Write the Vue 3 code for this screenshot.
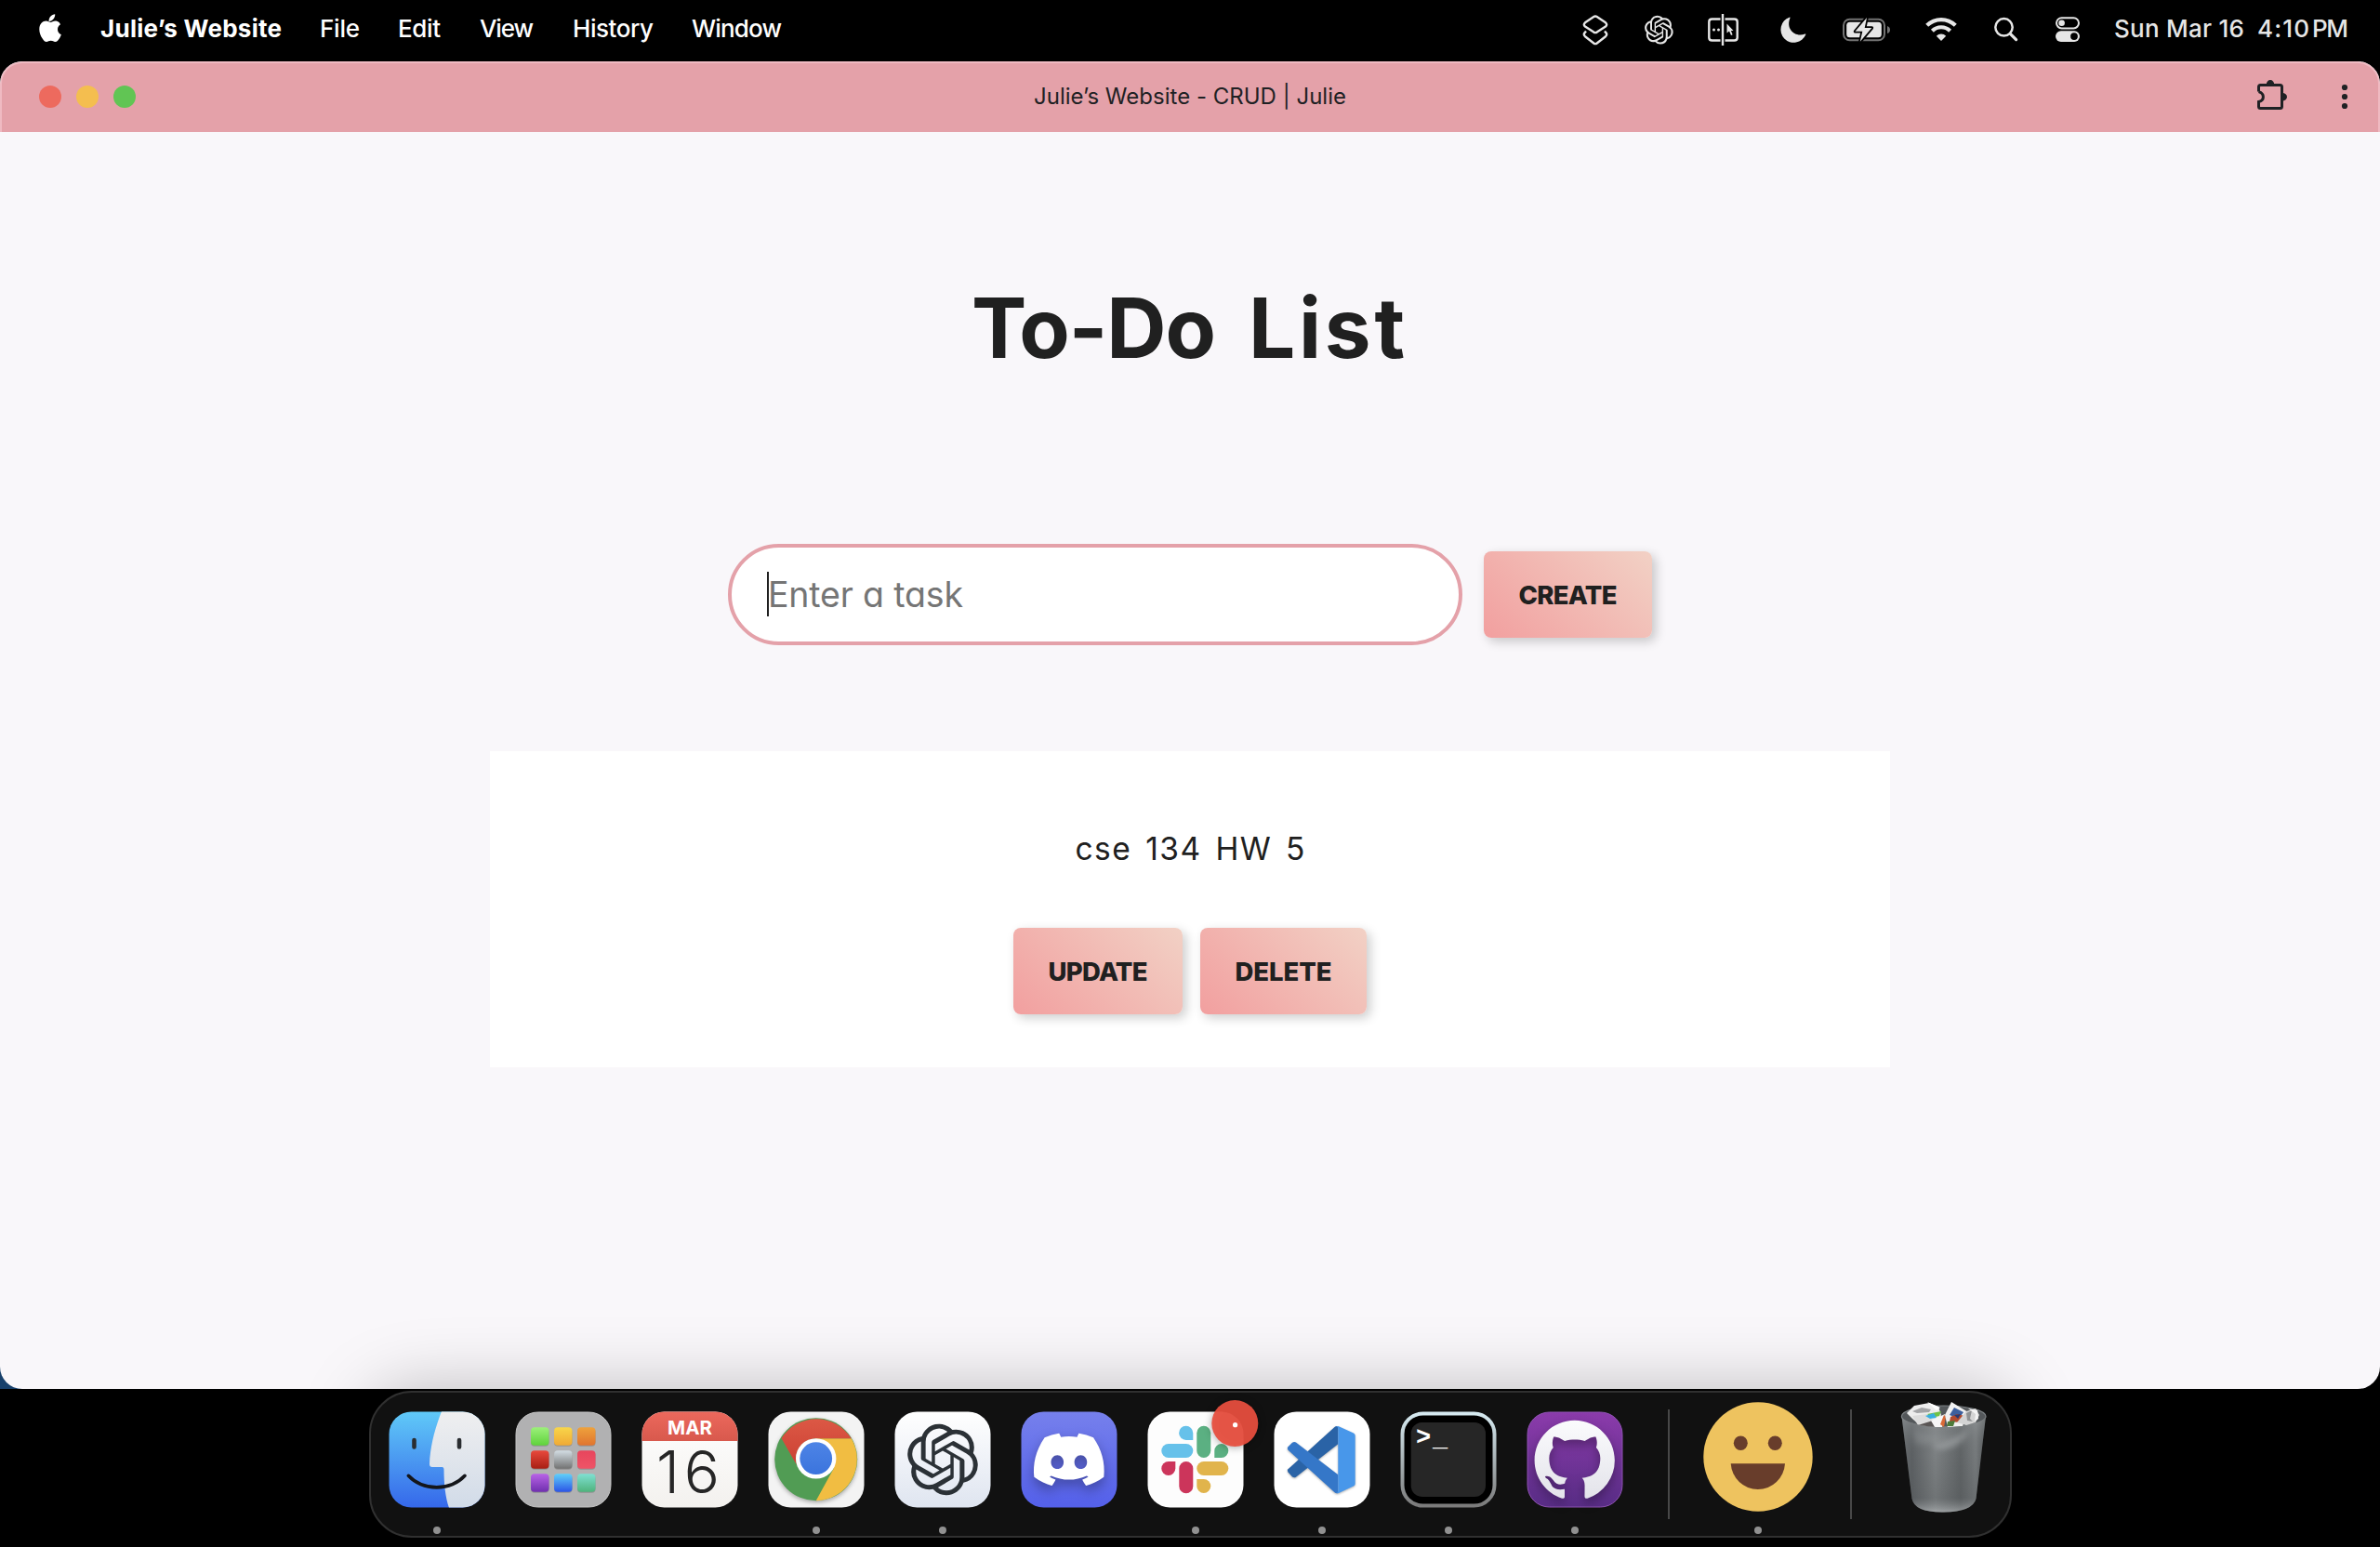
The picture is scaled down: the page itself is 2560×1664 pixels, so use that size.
<script setup>
const menus = [
  { label: 'File', width: 43, left: 344 },
  { label: 'Edit', width: 46, left: 428 },
  { label: 'View', width: 58, left: 516 },
  { label: 'History', width: 87, left: 616 },
  { label: 'Window', width: 97, left: 744 },
]
const menuGaps = menus.map((m, i) =>
  i === 0 ? 39 : m.left - menus[i - 1].left - menus[i - 1].width
)

const tileColors = [
  ['#9cf07a', '#5fd23c'], ['#f8d64a', '#f0a935'], ['#eea23c', '#e0742f'],
  ['#e8493c', '#a81f14'], ['#d3dde3', '#727272'], ['#e8455c', '#ee5467'],
  ['#b863e6', '#6f2fae'], ['#5fd0fa', '#2b54e6'], ['#7fe0d2', '#4fb37c'],
]
const tiles = tileColors.map((c, i) => ({
  id: 'tile' + i,
  from: c[0],
  to: c[1],
  x: 17 + (i % 3) * 25,
  y: 17.3 + Math.floor(i / 3) * 25,
}))

const knot =
  'M22.2819 9.8211a5.9847 5.9847 0 0 0-.5157-4.9108 6.0462 6.0462 0 0 0-6.5098-2.9A6.0651 6.0651 0 0 0 4.9807 4.1818a5.9847 5.9847 0 0 0-3.9977 2.9 6.0462 6.0462 0 0 0 .7427 7.0966 5.98 5.98 0 0 0 .511 4.9107 6.051 6.051 0 0 0 6.5146 2.9001A5.9847 5.9847 0 0 0 13.2599 24a6.0557 6.0557 0 0 0 5.7718-4.2058 5.9894 5.9894 0 0 0 3.9977-2.9001 6.0557 6.0557 0 0 0-.7475-7.0729zm-9.022 12.6081a4.4755 4.4755 0 0 1-2.8764-1.0408l.1419-.0804 4.7783-2.7582a.7948.7948 0 0 0 .3927-.6813v-6.7369l2.02 1.1686a.071.071 0 0 1 .038.052v5.5826a4.504 4.504 0 0 1-4.4945 4.4944zm-9.6607-4.1254a4.4708 4.4708 0 0 1-.5346-3.0137l.142.0852 4.783 2.7582a.7712.7712 0 0 0 .7806 0l5.8428-3.3685v2.3324a.0804.0804 0 0 1-.0332.0615L9.74 19.9502a4.4992 4.4992 0 0 1-6.1408-1.6464zM2.3408 7.8956a4.485 4.485 0 0 1 2.3655-1.9728V11.6a.7664.7664 0 0 0 .3879.6765l5.8144 3.3543-2.0201 1.1685a.0757.0757 0 0 1-.071 0l-4.8303-2.7865A4.504 4.504 0 0 1 2.3408 7.872zm16.5963 3.8558L13.1038 8.364 15.1192 7.2a.0757.0757 0 0 1 .071 0l4.8303 2.7913a4.4944 4.4944 0 0 1-.6765 8.1042v-5.6772a.79.79 0 0 0-.407-.667zm2.0107-3.0231l-.142-.0852-4.7735-2.7818a.7759.7759 0 0 0-.7854 0L9.409 9.2297V6.8974a.0662.0662 0 0 1 .0284-.0615l4.8303-2.7866a4.4992 4.4992 0 0 1 6.6802 4.66zM8.3065 12.863l-2.02-1.1638a.0804.0804 0 0 1-.038-.0567V6.0742a4.4992 4.4992 0 0 1 7.3757-3.4537l-.142.0805L8.704 5.459a.7948.7948 0 0 0-.3927.6813zm1.0976-2.3654l2.602-1.4998 2.6069 1.4998v2.9994l-2.5974 1.4997-2.6067-1.4997Z'

// Tracks a label out (or in) so that it fills the given width exactly.
const vTrack = {
  mounted(el, { value }) {
    const natural = el.getBoundingClientRect().width
    const spacing = (value - natural) / (el.textContent.length - 1)
    el.style.letterSpacing = spacing + 'px'
    el.style.marginRight = -spacing + 'px'
  },
}
</script>

<template>
  <div class="desktop">
    <header class="menubar">
      <svg class="apple" width="28" height="32" viewBox="0 0 28 32" fill="#fff">
        <path d="M19.2 0.2c.2 2-.6 3.900-1.800 5.300-1.200 1.500-3.100 2.500-4.800 2.400-.3-1.900.6-3.900 1.700-5.200C15.500 1.300 17.600.3 19.200.2z" />
        <path d="M25 11.200c-.2.200-3 1.800-3 5.400 0 4.200 3.600 5.600 3.800 5.700 0 .1-.6 2.100-2 4.100-1.200 1.800-2.500 3.600-4.400 3.600s-2.500-1.200-4.700-1.200c-2.200 0-3 1.200-4.700 1.200-1.800 0-3.100-1.700-4.500-3.800C3.700 23.700 2.300 19.900 2.300 16.400c0-5.800 3.700-8.800 7.300-8.800 1.900 0 3.500 1.300 4.700 1.300 1.200 0 3-1.400 5.200-1.400.8 0 3.800.1 5.500 3.700z" />
      </svg>
      <b class="appname"><span v-track="195">Julie’s Website</span></b>
      <nav class="menus">
        <div v-for="(m, i) in menus" :key="m.label" :style="{ width: m.width + 'px', marginLeft: menuGaps[i] + 'px' }">
          <span v-track="m.width">{{ m.label }}</span>
        </div>
      </nav>
      <div class="status">
        <svg width="28" height="34" viewBox="0 0 28 34" fill="none" stroke="#e6e6e6" stroke-width="2.400" stroke-linejoin="round">
          <path d="M12.300 3 3 9.300Q.6 11.400 3 13.500L12.300 19.600Q14 20.600 15.700 19.600L25 13.500Q27.400 11.400 25 9.300L15.700 3Q14 1.900 12.300 3Z" />
          <path d="M4 18.500 2.800 20Q.6 22 3 24.200L12.300 31.500Q14 32.700 15.700 31.500L25 24.200Q27.400 22 25.200 20L24 18.500" />
        </svg>
        <svg class="g39" width="31" height="34" viewBox="0 0 31 34" fill="#e6e6e6">
          <path :d="knot" transform="translate(0 1.800) scale(1.280)" />
        </svg>
        <svg class="g37" width="33" height="34" viewBox="0 0 33 34" fill="none" stroke="#e6e6e6" stroke-width="2.400">
          <path d="M13.500 5.500H4.500Q1.300 5.500 1.300 8.500V25.500Q1.300 28.500 4.500 28.500H13.500M18.500 5.500H28.500Q31.700 5.500 31.700 8.500V25.500Q31.700 28.500 28.500 28.500H18.500M16 0V34" />
          <path d="M20.500 10.500V20.500L23 18.500 25 23 26.600 22.300 24.900 18H27.500Z" fill="#e6e6e6" stroke="none" />
          <circle cx="6.500" cy="17" r="1.500" fill="#e6e6e6" stroke="none" />
          <circle cx="11.500" cy="17" r="1.500" fill="#e6e6e6" stroke="none" />
        </svg>
        <svg class="g45" width="28" height="34" viewBox="0 0 28 34" fill="#e6e6e6">
          <path d="M10.500 4.200C10.800 3.700 10.200 3.400 9.600 3.700A14 14 0 1 0 27.300 22.300C27.600 21.700 27.200 21.300 26.600 21.500C15.500 25.500 5.500 16 10.500 4.200Z" />
        </svg>
        <svg class="g39" width="52" height="34" viewBox="0 0 52 34">
          <rect x="1" y="5.700" width="44" height="22.600" rx="6.500" fill="none" stroke="#737373" stroke-width="2" />
          <path d="M48 13V21Q51 20 51 17T48 13Z" fill="#737373" />
          <rect x="4.200" y="8.800" width="37.600" height="16.400" rx="3.500" fill="#e6e6e6" />
          <path d="M26 4 13.500 18.800H21.300L18.800 29.800 31.300 15H23.700Z" fill="#e6e6e6" stroke="#000" stroke-width="3.600" stroke-linejoin="round" paint-order="stroke" />
        </svg>
        <svg class="g37" width="34" height="34" viewBox="0 0 34 34" fill="none" stroke="#e6e6e6" stroke-width="4.200">
          <path d="M1.700 12.300A21.800 21.800 0 0 1 32.300 12.300" />
          <path d="M7.400 18.200A13.600 13.600 0 0 1 26.600 18.200" />
          <path d="M17 29 11.800 23.700A7.400 7.400 0 0 1 22.200 23.700Z" fill="#e6e6e6" stroke="none" />
        </svg>
        <svg class="g40" width="26" height="34" viewBox="0 0 26 34" fill="none" stroke="#e6e6e6" stroke-width="2.500" stroke-linecap="round">
          <circle cx="10.500" cy="14.300" r="9.200" />
          <path d="M17.300 21.300 23.600 27.600" stroke-width="3.200" />
        </svg>
        <svg class="g40" width="26" height="34" viewBox="0 0 26 34">
          <rect x="1" y="4.200" width="24" height="11.200" rx="5.600" fill="none" stroke="#e6e6e6" stroke-width="2" />
          <circle cx="6.600" cy="9.800" r="3.300" fill="#e6e6e6" />
          <rect y="18.200" width="26" height="11.800" rx="5.900" fill="#e6e6e6" />
          <circle cx="20" cy="24.100" r="3.900" fill="#000" />
        </svg>
        <time class="clock">
          <span class="c1"><span v-track="140">Sun Mar 16</span></span>
          <span class="c2"><span v-track="56">4:10</span></span>
          <span class="c3"><span v-track="39">PM</span></span>
        </time>
      </div>
    </header>

    <section class="window">
      <div class="titlebar">
        <div class="lights"><i class="close"></i><i class="mini"></i><i class="zoom"></i></div>
        <div class="title"><span v-track="336">Julie’s Website - CRUD | Julie</span></div>
        <div class="tools">
          <svg width="33" height="33" viewBox="0 0 33 33" fill="none" stroke="#1f2124" stroke-width="3">
            <path d="M1.500 12.600V7.500Q1.500 5.500 3.500 5.500H24.500Q26.500 5.500 26.500 7.500V28.500Q26.500 30.500 24.500 30.500H3.500Q1.500 30.500 1.500 28.500V23.500C8 22 8 14.500 1.500 12.600" />
            <path d="M9.800 5A4.200 5 0 0 1 18.200 5ZM27 14.100A5 4.200 0 0 1 27 22.500Z" fill="#1f2124" stroke="none" />
          </svg>
          <svg class="more" width="8" height="28" viewBox="0 0 8 28" fill="#1f2124">
            <circle cx="4" cy="4" r="3.100" /><circle cx="4" cy="14" r="3.100" /><circle cx="4" cy="24" r="3.100" />
          </svg>
        </div>
      </div>

      <main class="page">
        <h1><span v-track="263">To-Do</span> <span v-track="168">List</span></h1>
        <form class="entry" @submit.prevent>
          <div class="field">
            <i class="caret"></i>
            <span v-track="210" class="placeholder">Enter a task</span>
          </div>
          <button class="btn create"><span v-track="106">CREATE</span></button>
        </form>
        <article class="task">
          <p><span v-track="247">cse 134 HW 5</span></p>
          <div class="actions">
            <button class="btn update"><span v-track="107">UPDATE</span></button>
            <button class="btn delete"><span v-track="104">DELETE</span></button>
          </div>
        </article>
      </main>
    </section>

    <footer class="dock">
      <div class="slot">
        <svg width="104" height="104" viewBox="0 0 104 104">
          <defs>
            <linearGradient id="fb" x2="0" y2="1"><stop stop-color="#60caf8" /><stop offset="1" stop-color="#3567ea" /></linearGradient>
            <linearGradient id="fw" x2="0" y2="1"><stop stop-color="#efeff0" /><stop offset="1" stop-color="#d1dbe8" /></linearGradient>
            <clipPath id="tile-shape"><rect x=".5" y=".5" width="103" height="103" rx="24" /></clipPath>
          </defs>
          <g clip-path="url(#tile-shape)">
            <rect width="104" height="104" fill="url(#fb)" />
            <path d="M57 0C50 18 44.500 38 44 57Q44 60 47 60H57.500Q59.500 60 59.500 63C59.500 78 61 92 65 104H104V0Z" fill="url(#fw)" />
            <path d="M27.500 31V38.500M76 31V38.500" stroke="#2a2d31" stroke-width="4.600" stroke-linecap="round" />
            <path d="M21.300 69.300C37 86 66.500 86 82 69.300" fill="none" stroke="#14161a" stroke-width="3.600" stroke-linecap="round" />
          </g>
        </svg>
        <i class="dot"></i>
      </div>
      <div class="slot">
        <svg width="104" height="104" viewBox="0 0 104 104">
          <defs>
            <linearGradient v-for="t in tiles" :id="t.id" :key="t.id" x2="0" y2="1"><stop :stop-color="t.from" /><stop offset="1" :stop-color="t.to" /></linearGradient>
          </defs>
          <rect x="1" y="1" width="102" height="102" rx="23.500" fill="#b1b1b2" stroke="#c6c6c6" />
          <rect v-for="t in tiles" :key="t.id" :x="t.x" :y="t.y + 1" width="19.500" height="19.500" rx="4" fill="#7d7d7d" opacity=".6" />
          <rect v-for="t in tiles" :key="t.id" :x="t.x" :y="t.y" width="19.500" height="19.500" rx="4" :fill="`url(#${t.id})`" />
        </svg>
      </div>
      <div class="slot">
        <svg width="104" height="104" viewBox="0 0 104 104">
          <defs>
            <linearGradient id="cr" x2="0" y2="1"><stop stop-color="#ec695d" /><stop offset="1" stop-color="#d8594d" /></linearGradient>
            <linearGradient id="cw" x2="0" y2="1"><stop stop-color="#fff" /><stop offset="1" stop-color="#f3f1ee" /></linearGradient>
            <clipPath id="page-shape"><rect x=".5" y=".5" width="103" height="103" rx="24" /></clipPath>
          </defs>
          <g clip-path="url(#page-shape)">
            <rect width="104" height="104" fill="url(#cw)" />
            <rect width="104" height="32" fill="url(#cr)" />
          </g>
          <text x="52" y="25" text-anchor="middle" font-size="20.500" font-weight="700" fill="#fff" textLength="48">MAR</text>
          <text x="50" y="87.700" text-anchor="middle" font-size="63.500" font-weight="300" fill="#262626" textLength="68">16</text>
        </svg>
      </div>
      <div class="slot">
        <svg width="104" height="104" viewBox="0 0 104 104">
          <defs>
            <linearGradient id="gr" x2="0" y2="1"><stop stop-color="#dc5845" /><stop offset="1" stop-color="#cb4133" /></linearGradient>
            <linearGradient id="gb" x2="0" y2="1"><stop stop-color="#4d84e6" /><stop offset="1" stop-color="#3b74dd" /></linearGradient>
          </defs>
          <rect x=".5" y=".5" width="103" height="103" rx="24" fill="#f3f3f3" />
          <g class="lift">
            <circle cx="51.700" cy="51.700" r="44.500" fill="#519c54" />
            <path d="M51.700 29.300H89.800A44.500 44.500 0 0 1 51.700 96.200L70.800 61.500Z" fill="#f1bd42" />
            <path d="M14.500 29A44.500 44.500 0 0 1 89.800 29.300H51.700A22 22 0 0 0 31 58Z" fill="url(#gr)" />
          </g>
          <circle cx="51.700" cy="50.900" r="21.700" fill="#fff" />
          <circle cx="51.700" cy="50.700" r="17.400" fill="url(#gb)" />
        </svg>
        <i class="dot"></i>
      </div>
      <div class="slot">
        <svg width="104" height="104" viewBox="0 0 104 104">
          <defs><linearGradient id="kw" x2="0" y2="1"><stop stop-color="#fff" /><stop offset="1" stop-color="#dfe5f0" /></linearGradient></defs>
          <rect x=".5" y=".5" width="103" height="103" rx="24" fill="url(#kw)" />
          <path :d="knot" fill="#2b3136" transform="translate(13.700 13.700) scale(3.190)" />
        </svg>
        <i class="dot"></i>
      </div>
      <div class="slot">
        <svg width="104" height="104" viewBox="0 0 104 104">
          <defs><linearGradient id="db" x2="0" y2="1"><stop stop-color="#7680ec" /><stop offset="1" stop-color="#5460ea" /></linearGradient></defs>
          <rect x=".5" y=".5" width="103" height="103" rx="24" fill="url(#db)" />
          <path class="lift" fill="#fff" transform="translate(14 14.900) scale(3.154 3.080)" d="M20.317 4.3698a19.7913 19.7913 0 00-4.8851-1.5152.0741.0741 0 00-.0785.0371c-.211.3753-.4447.8648-.6083 1.2495-1.8447-.2762-3.68-.2762-5.4868 0-.1636-.3933-.4058-.8742-.6177-1.2495a.077.077 0 00-.0785-.037 19.7363 19.7363 0 00-4.8852 1.515.0699.0699 0 00-.0321.0277C.5334 9.0458-.319 13.5799.0992 18.0578a.0824.0824 0 00.0312.0561c2.0528 1.5076 4.0413 2.4228 5.9929 3.0294a.0777.0777 0 00.0842-.0276c.4616-.6304.8731-1.2952 1.226-1.9942a.076.076 0 00-.0416-.1057c-.6528-.2476-1.2743-.5495-1.8722-.8923a.077.077 0 01-.0076-.1277c.1258-.0943.2517-.1923.3718-.2914a.0743.0743 0 01.0776-.0105c3.9278 1.7933 8.18 1.7933 12.0614 0a.0739.0739 0 01.0785.0095c.1202.099.246.1981.3728.2924a.077.077 0 01-.0066.1276 12.2986 12.2986 0 01-1.873.8914.0766.0766 0 00-.0407.1067c.3604.698.7719 1.3628 1.225 1.9932a.076.076 0 00.0842.0286c1.961-.6067 3.9495-1.5219 6.0023-3.0294a.077.077 0 00.0313-.0552c.5004-5.177-.8382-9.6739-3.5485-13.6604a.061.061 0 00-.0312-.0286zM8.02 15.3312c-1.1825 0-2.1569-1.0857-2.1569-2.419 0-1.3332.9555-2.4189 2.157-2.4189 1.2108 0 2.1757 1.0952 2.1568 2.419 0 1.3332-.9555 2.4189-2.1569 2.4189zm7.9748 0c-1.1825 0-2.1569-1.0857-2.1569-2.419 0-1.3332.9554-2.4189 2.1569-2.4189 1.2108 0 2.1757 1.0952 2.1568 2.419 0 1.3332-.946 2.4189-2.1568 2.4189Z" />
        </svg>
      </div>
      <div class="slot">
        <svg width="104" height="104" viewBox="0 0 104 104">
          <rect x=".5" y=".5" width="103" height="103" rx="24" fill="#fdfdfd" />
          <g fill="#66c1ea"><path d="M49.300 31H41.800A7.600 7.600 0 1 1 49.300 23.300Z" /><rect x="15.300" y="35" width="34" height="15" rx="7.500" /></g>
          <g fill="#5bb082"><rect x="53.300" y="15.700" width="15" height="34.300" rx="7.500" /><path d="M72.300 50V42.500A7.500 7.500 0 1 1 79.800 50Z" /></g>
          <g fill="#cc355b"><path d="M30.300 54V61.500A7.500 7.500 0 1 1 22.800 54Z" /><rect x="34.300" y="54" width="15" height="34.300" rx="7.500" /></g>
          <g fill="#e1b44c"><rect x="53.300" y="54" width="34" height="15" rx="7.500" /><path d="M53.300 73H60.800A7.500 7.500 0 1 1 53.300 80.500Z" /></g>
          <circle class="badge" cx="94.300" cy="13" r="25" fill="#e84f3f" fill-opacity=".94" />
          <circle cx="94.600" cy="14.700" r="2.600" fill="#fff" />
        </svg>
        <i class="dot"></i>
      </div>
      <div class="slot">
        <svg width="104" height="104" viewBox="0 0 104 104">
          <rect x=".5" y=".5" width="103" height="103" rx="24" fill="#fff" />
          <g class="soft">
            <path d="M69.300 16.500Q67.500 15.300 65.500 17L15.500 62.300Q14 63.800 15.500 65.500L20 70.500Q22 72 24 70.700L69.300 35.300Z" fill="#2a63a6" />
            <path d="M69.300 87.700Q67.500 89 65.500 87.200L15.500 41.800Q14 40 15.500 38.300L20 33.800Q22 32.200 24 33.500L69.300 68.300Z" fill="#3577c8" />
            <path d="M67 16.300Q68 15.600 70 16.300L86 23.500Q87.700 24.500 87.700 26V78Q87.700 79.500 86 80.500L70 88Q68 88.500 67 87.800Q69.300 88 69.300 85V19Q69.300 16.500 67 16.300Z" fill="#4897ea" />
          </g>
        </svg>
        <i class="dot"></i>
      </div>
      <div class="slot">
        <svg width="104" height="104" viewBox="0 0 104 104">
          <defs><linearGradient id="ts" x2="0" y2="1"><stop stop-color="#d5e9f0" /><stop offset="1" stop-color="#7b7b7b" /></linearGradient></defs>
          <rect x="2.500" y="2.500" width="99" height="99" rx="22" fill="#000" stroke="url(#ts)" stroke-width="4" />
          <rect x="11.700" y="12" width="80.300" height="80" rx="12" fill="#262626" />
          <text x="17" y="36" class="prompt">&gt;</text>
          <text x="35" y="36.500" class="prompt">_</text>
        </svg>
        <i class="dot"></i>
      </div>
      <div class="slot">
        <svg width="104" height="104" viewBox="0 0 104 104">
          <defs>
            <linearGradient id="hp" x2="0" y2="1"><stop stop-color="#8b3bab" /><stop offset="1" stop-color="#582d86" /></linearGradient>
            <linearGradient id="hw" x2="0" y2="1"><stop stop-color="#fbfbfd" /><stop offset="1" stop-color="#e3e3ea" /></linearGradient>
          </defs>
          <rect x="1" y="1" width="102" height="102" rx="23.500" fill="url(#hp)" stroke="#8f52b3" />
          <path class="soft" fill="url(#hw)" transform="translate(8.600 9.700) scale(5.390)" d="M8 0C3.580 0 0 3.580 0 8c0 3.540 2.290 6.530 5.470 7.590.4.070.55-.170.55-.380 0-.190-.010-.820-.010-1.490-2.010.370-2.530-.490-2.690-.940-.090-.230-.480-.940-.820-1.130-.280-.150-.680-.520-.010-.530.630-.010 1.080.580 1.230.820.720 1.210 1.870.870 2.330.660.070-.520.280-.870.510-1.070-1.780-.200-3.640-.890-3.640-3.950 0-.870.310-1.590.820-2.150-.080-.200-.360-1.020.080-2.120 0 0 .670-.210 2.200.820.640-.180 1.320-.270 2-.270.680 0 1.360.090 2 .270 1.530-1.040 2.200-.820 2.200-.820.440 1.100.160 1.920.080 2.120.510.560.820 1.270.820 2.150 0 3.070-1.870 3.750-3.650 3.950.290.250.540.730.540 1.480 0 1.070-.010 1.930-.010 2.200 0 .210.150.460.550.380A8.013 8.013 0 0016 8c0-4.420-3.580-8-8-8z" />
        </svg>
        <i class="dot"></i>
      </div>
      <i class="rule r1"></i>
      <div class="slot face">
        <svg width="118" height="118" viewBox="0 0 118 118">
          <circle cx="59" cy="59" r="58.700" fill="#eec35f" />
          <ellipse cx="40.300" cy="44.300" rx="7.500" ry="7.700" fill="#683d2b" />
          <ellipse cx="77.300" cy="44.300" rx="7.500" ry="7.700" fill="#683d2b" />
          <path d="M29.700 66.300H88A29.200 29.500 0 0 1 29.700 66.300Z" fill="#683d2b" />
        </svg>
        <i class="dot"></i>
      </div>
      <i class="rule r2"></i>
      <div class="slot bin">
        <svg width="92" height="120" viewBox="0 0 92 120">
          <defs>
            <linearGradient id="bn"><stop stop-color="#6f7477" /><stop offset=".12" stop-color="#5f6366" /><stop offset=".4" stop-color="#85898b" /><stop offset=".7" stop-color="#636769" /><stop offset=".88" stop-color="#7e8284" /><stop offset="1" stop-color="#55595b" /></linearGradient>
            <linearGradient id="bv" x2="0" y2="1"><stop stop-color="#a0a4a6" stop-opacity=".45" /><stop offset=".4" stop-color="#4a4e50" stop-opacity=".15" /><stop offset=".85" stop-color="#4a4e50" stop-opacity=".35" /><stop offset="1" stop-color="#b5b9bb" stop-opacity=".6" /></linearGradient>
            <clipPath id="mouth"><path d="M0-4H92V15A45.500 12 0 0 1 .5 15Z" /></clipPath>
          </defs>
          <ellipse cx="45.700" cy="15.500" rx="45.300" ry="11.500" fill="#54585b" stroke="#7d8285" stroke-width="1.200" />
          <path d="M.5 15.500A45.300 11.500 0 0 0 91 15.500L80.500 104Q77 118 45.700 118.500T11.500 104Z" fill="url(#bn)" />
          <path d="M.5 15.500A45.300 11.500 0 0 0 91 15.500L80.500 104Q77 118 45.700 118.500T11.500 104Z" fill="url(#bv)" />
          <g clip-path="url(#mouth)">
            <path d="M6 12 14 4 30 1 40 5 43 14 38 27 20 25 12 18Z" fill="#ededed" />
            <path d="M12 10 22 6 32 8 30 11 17 12Z" fill="#a3a4a6" />
            <path d="M28 0 42 6 38 9Z" fill="#fff" />
            <path d="M16 23 26 18 40 21 46 27 22 27Z" fill="#5a5655" />
            <path d="M12 15 28 13 34 20 18 25Z" fill="#dcdcdc" />
            <path d="M28 13 43 10 41 15 33 17Z" fill="#6fc247" />
            <path d="M26 15 35 12 38 17 31 18Z" fill="#38aee0" />
            <path d="M32 20 47 13 44 28 36 27Z" fill="#f6f6f6" />
            <path d="M42 24 46 14 48 16 46 27Z" fill="#d96a37" />
            <path d="M47 14 54 0 72 11 66 26 50 27Z" fill="#f1f1f1" />
            <path d="M52 14 57 6 67 11 62 18Z" fill="#3d5f9d" />
            <path d="M53 16 60 13 68 15 63 22 52 21Z" fill="#b14a2e" />
            <path d="M57 14 64 13 61 18Z" fill="#263a72" />
            <path d="M50 21 58 20 56 26 49 26Z" fill="#4d7b3a" />
            <path d="M60 22 70 10 80 7 84 14 80 22 70 25Z" fill="#d4d4d4" />
            <path d="M70 12 76 9 74 18 77 21 71 20Z" fill="#8f9193" />
            <path d="M72 7 82 9 83 18 79 21 80 13Z" fill="#f4f4f4" />
          </g>
          <path class="sheen" d="M34 46Q52 42 72 30Q66 48 44 51Q36 51 34 46Z" fill="#b6babc" opacity=".5" />
          <path class="sheen" d="M13 30Q30 38 60 34Q30 50 15 44Z" fill="#a9adaf" opacity=".25" />
        </svg>
      </div>
    </footer>
  </div>
</template>

<style>
html, body { margin: 0; background: #000; overflow: hidden; }
</style>

<style scoped>
.desktop {
  width: 2560px; height: 1664px; overflow: hidden;
  display: flex; flex-direction: column; align-items: center;
  background: linear-gradient(#17406b, #17406b) 0 1464px / 40px 30px no-repeat, #000;
  font-family: Inter, "Liberation Sans", sans-serif;
}
svg { display: block; flex: none; overflow: visible; }
span { white-space: pre; display: inline-block; }

.menubar {
  width: 2560px; height: 66px; flex: none; box-sizing: border-box;
  display: flex; align-items: flex-start; padding-left: 40px;
  color: #fff; font-size: 26px; line-height: 32px;
}
.apple { margin-top: 15px; }
.appname { width: 197px; margin: 15px 0 0 40px; font-weight: 700; }
.menus { display: flex; margin-top: 15px; font-weight: 500; }
.status { display: flex; margin: 15px 34px 0 auto; color: #e6e6e6; }
.g37 { margin-left: 37px; }
.g39 { margin-left: 39px; }
.g40 { margin-left: 40px; }
.g45 { margin-left: 45px; }
.clock { display: flex; margin-left: 37px; font-weight: 500; }
.c1 { width: 140px; margin-right: 14px; }
.c2 { width: 55px; margin-right: 4px; }
.c3 { width: 39px; }

.window {
  width: 2560px; height: 1428px; flex: none; overflow: hidden;
  display: flex; flex-direction: column;
  background: #f9f7fa; border-radius: 24px;
}
.titlebar {
  height: 76px; flex: none; box-sizing: border-box;
  display: flex; align-items: center;
  background: #e4a1a9; border: solid #efbac2; border-width: 2px 2px 0;
  border-radius: 24px 24px 0 0; padding: 0 32px 2px 40px;
}
.lights, .tools { flex: 1; display: flex; align-items: center; }
.lights { gap: 16px; }
.lights i { width: 24px; height: 24px; border-radius: 50%; }
.close { background: #ed6a5e; }
.mini { background: #f4be4f; }
.zoom { background: #61c554; }
.title { width: 337px; margin-right: 7px; font-size: 24px; line-height: 30px; color: #1f2124; }
.tools { justify-content: flex-end; gap: 57px; }
.tools svg:first-child { margin-top: -3px; }

.page { display: flex; flex-direction: column; align-items: center; color: #202020; }
h1 {
  width: 470px; box-sizing: border-box; padding-right: 4px;
  margin: 157px 0 0; font-size: 89px; line-height: 108px; font-weight: 650;
  display: flex; justify-content: space-between;
}
.entry { display: flex; align-items: center; gap: 23px; margin: 178px 0 0; }
.field {
  width: 790px; height: 109px; box-sizing: border-box;
  display: flex; align-items: center;
  border: 4px solid #e4a1a9; border-radius: 55px; background: #fff; padding-left: 38px;
}
.caret { width: 2px; height: 48px; background: #202020; margin-top: -2px; }
.placeholder { color: #757575; font-size: 37.5px; font-weight: 400; margin-left: -1px; font-feature-settings: "cv11"; }
.btn {
  height: 93px; border: 0; border-radius: 8px; padding: 0;
  display: flex; align-items: center; justify-content: center;
  background: linear-gradient(45deg, #f29f9f, #f2d1c5);
  box-shadow: 4px 4px 12px rgba(0, 0, 0, .2);
  font: 800 27.5px/34px Inter, "Liberation Sans", sans-serif; color: #202020;
}
.create { width: 181px; }
.update { width: 182px; }
.delete { width: 179px; }
.task {
  width: 1506px; height: 340px; margin-top: 114px; background: #fff;
  display: flex; flex-direction: column; align-items: center;
}
.task p { width: 247px; margin: 85px 0 0; font-size: 33.500px; line-height: 40px; }
.task p span { word-spacing: 4px; }
.actions { display: flex; gap: 19px; margin-top: 65px; }

.dock {
  width: 1767px; height: 158px; flex: none; box-sizing: border-box; margin-top: 2px;
  display: flex; position: relative;
  background: #111; border: 2px solid #303030; border-radius: 46px; padding-left: 3px;
  box-shadow: 0 0 76px rgba(0, 0, 0, .26);
}
.slot {
  width: 136px; flex: none; box-sizing: border-box; padding: 20px 0 2px;
  display: flex; flex-direction: column; align-items: center;
}
.dot { width: 8px; height: 8px; border-radius: 50%; background: #919191; margin-top: auto; }
.face { padding-top: 10px; margin-left: 27px; }
.bin { padding-top: 10px; margin-left: 31px; }
.rule { width: 2px; height: 118px; flex: none; margin-top: 18px; background: #484848; }
.r1 { margin-left: 32px; }
.r2 { margin-left: 31px; }
.lift { filter: drop-shadow(0 2px 2px rgba(0, 0, 0, .3)); }
.soft { filter: drop-shadow(0 1px 1px rgba(0, 0, 0, .3)); }
.badge { filter: drop-shadow(0 1px 4px rgba(0, 0, 0, .35)); }
.sheen { filter: blur(3px); }
.prompt { font: 700 27px "Liberation Mono", monospace; fill: #fff; }
</style>
